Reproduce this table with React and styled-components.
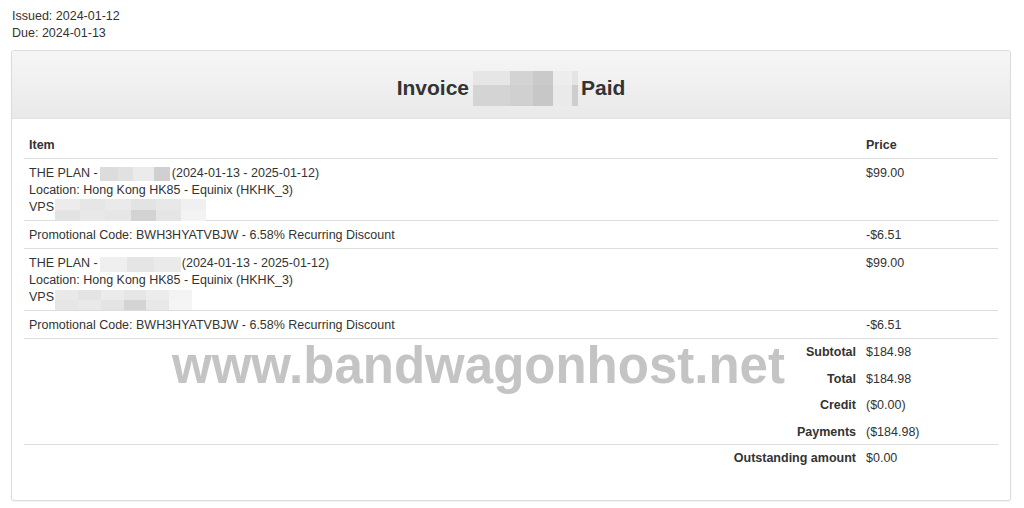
import React from "react";
import styled, { createGlobalStyle } from "styled-components";

const Global = createGlobalStyle`
  html, body { margin: 0; padding: 0; background: #fff; }
  body { font-family: "Liberation Sans", Arial, sans-serif; font-size: 12.5px; color: #333; }
`;

const Page = styled.div`
  padding: 8px 13px 8px 11px;
`;

const Meta = styled.div`
  padding-left: 1px;
  line-height: 17px;
  margin-bottom: 8px;
`;

const Panel = styled.div`
  position: relative;
  border: 1px solid #dcdcdc;
  border-radius: 3px;
  box-shadow: 0 1px 2px rgba(0, 0, 0, 0.06);
  background: #fff;
  overflow: hidden;
`;

const Header = styled.div`
  padding: 25px 0 18px;
  text-align: center;
  background: linear-gradient(to bottom, #f6f6f6 0%, #e9e9e9 100%);
  border-bottom: 1px solid #e2e2e2;
`;

const Title = styled.h1`
  margin: 0;
  font-size: 21px;
  line-height: 24px;
  font-weight: bold;
  color: #333;
`;

const Body = styled.div`
  padding: 12px 12px 12px;
`;

const Table = styled.table`
  width: 100%;
  border-collapse: collapse;
  margin-bottom: 17px;
`;

const Th = styled.th`
  text-align: left;
  font-weight: bold;
  padding: 6px 5px 4px;
  line-height: 17px;
  border-bottom: 1px solid #dddddd;
  width: ${(p) => p.$w || "auto"};
`;

const Td = styled.td`
  padding: 6px 5px 4px;
  line-height: 17px;
  vertical-align: top;
  border-top: 1px solid #dddddd;
`;

const TotalLabel = styled.td`
  padding: 5px 5px 3.5px;
  line-height: 17px;
  text-align: right;
  font-weight: bold;
  border-top: 1px solid ${(p) => (p.$line ? "#dddddd" : "transparent")};
`;

const TotalValue = styled.td`
  padding: 5px 5px 3.5px;
  line-height: 17px;
  border-top: 1px solid ${(p) => (p.$line ? "#dddddd" : "transparent")};
`;

const Redact = styled.span`
  display: inline-block;
  position: relative;
  width: ${(p) => p.$w}px;
  height: 0;
  margin: 0 ${(p) => p.$mr || 0}px 0 ${(p) => p.$ml || 0}px;
  vertical-align: baseline;
`;

const Mosaic = styled.span`
  position: absolute;
  left: 0;
  top: ${(p) => p.$top}px;
  width: 100%;
  height: ${(p) => p.$h}px;
  display: grid;
  grid-template-columns: ${(p) => p.$cols};
  grid-template-rows: ${(p) => p.$rows};
`;

const Cell = styled.span`
  display: block;
  background: ${(p) => p.$c};
`;

const Watermark = styled.div`
  position: absolute;
  left: 160px;
  top: 289px;
  font-size: 51px;
  line-height: 1;
  font-weight: bold;
  color: #c4c4c4;
  white-space: nowrap;
  pointer-events: none;
`;

function Blur({ w, h, top, ml, mr, cols, rows, cells }) {
  return (
    <Redact $w={w} $ml={ml} $mr={mr}>
      <Mosaic $top={top} $h={h} $cols={cols} $rows={rows}>
        {cells.map((c, i) => (
          <Cell key={i} $c={c} />
        ))}
      </Mosaic>
    </Redact>
  );
}

const planBlur1 = {
  w: 70, h: 14, top: -10, ml: 2, mr: 2,
  cols: "18px 15px 21px 16px", rows: "1fr",
  cells: ["#dcdcdc", "#e1e1e1", "#ebebeb", "#d0d0d0"],
};
const planBlur2 = {
  w: 81, h: 15, top: -10, ml: 2, mr: 1,
  cols: "27px 27px 27px", rows: "1fr",
  cells: ["#efefef", "#e5e5e5", "#eaeaea"],
};
const vpsBlur1 = {
  w: 151, h: 22, top: -12, ml: 1,
  cols: "repeat(6, 1fr)", rows: "11px 11px",
  cells: [
    "#ececec", "#e6e6e6", "#eaeaea", "#e3e3e3", "#e8e8e8", "#f0f0f0",
    "#e3e3e3", "#e8e8e8", "#e6e6e6", "#d3d3d3", "#e5e5e5", "#f3f3f3",
  ],
};
const vpsBlur2 = {
  w: 137, h: 20, top: -11, ml: 1,
  cols: "repeat(6, 1fr)", rows: "10px 10px",
  cells: [
    "#e9e9e9", "#e4e4e4", "#ebebeb", "#e6e6e6", "#ececec", "#f3f3f3",
    "#e6e6e6", "#e9e9e9", "#e4e4e4", "#d4d4d4", "#e8e8e8", "#f5f5f5",
  ],
};
const titleBlur = {
  w: 105, h: 35, top: -24, ml: 4, mr: 3,
  cols: "37px 23px 20px 19px 6px", rows: "14px 21px",
  cells: [
    "#e6e6e6", "#d3d3d3", "#cacaca", "#ededed", "#e4e4e4",
    "#d4d4d4", "#d0d0d0", "#c7c7c7", "#eaeaea", "#cdcdcd",
  ],
};

function PlanItem({ plan, vps }) {
  return (
    <>
      THE PLAN -<Blur {...plan} />(2024-01-13 - 2025-01-12)
      <br />
      Location: Hong Kong HK85 - Equinix (HKHK_3)
      <br />
      VPS
      <Blur {...vps} />
    </>
  );
}

const promo = "Promotional Code: BWH3HYATVBJW - 6.58% Recurring Discount";

const totals = [
  { label: "Subtotal", value: "$184.98" },
  { label: "Total", value: "$184.98" },
  { label: "Credit", value: "($0.00)" },
  { label: "Payments", value: "($184.98)" },
  { label: "Outstanding amount", value: "$0.00", line: true },
];

export default function App() {
  return (
    <>
      <Global />
      <Page>
        <Meta>
          Issued: 2024-01-12
          <br />
          Due: 2024-01-13
        </Meta>
        <Panel>
          <Header>
            <Title>
              Invoice
              <Blur {...titleBlur} />
              Paid
            </Title>
          </Header>
          <Body>
            <Table>
              <thead>
                <tr>
                  <Th>Item</Th>
                  <Th $w="127px">Price</Th>
                </tr>
              </thead>
              <tbody>
                <tr>
                  <Td><PlanItem plan={planBlur1} vps={vpsBlur1} /></Td>
                  <Td>$99.00</Td>
                </tr>
                <tr>
                  <Td>{promo}</Td>
                  <Td>-$6.51</Td>
                </tr>
                <tr>
                  <Td><PlanItem plan={planBlur2} vps={vpsBlur2} /></Td>
                  <Td>$99.00</Td>
                </tr>
                <tr>
                  <Td>{promo}</Td>
                  <Td>-$6.51</Td>
                </tr>
                {totals.map((t, i) => (
                  <tr key={t.label}>
                    <TotalLabel $line={i === 0 || t.line}>{t.label}</TotalLabel>
                    <TotalValue $line={i === 0 || t.line}>{t.value}</TotalValue>
                  </tr>
                ))}
              </tbody>
            </Table>
          </Body>
          <Watermark>www.bandwagonhost.net</Watermark>
        </Panel>
      </Page>
    </>
  );
}
